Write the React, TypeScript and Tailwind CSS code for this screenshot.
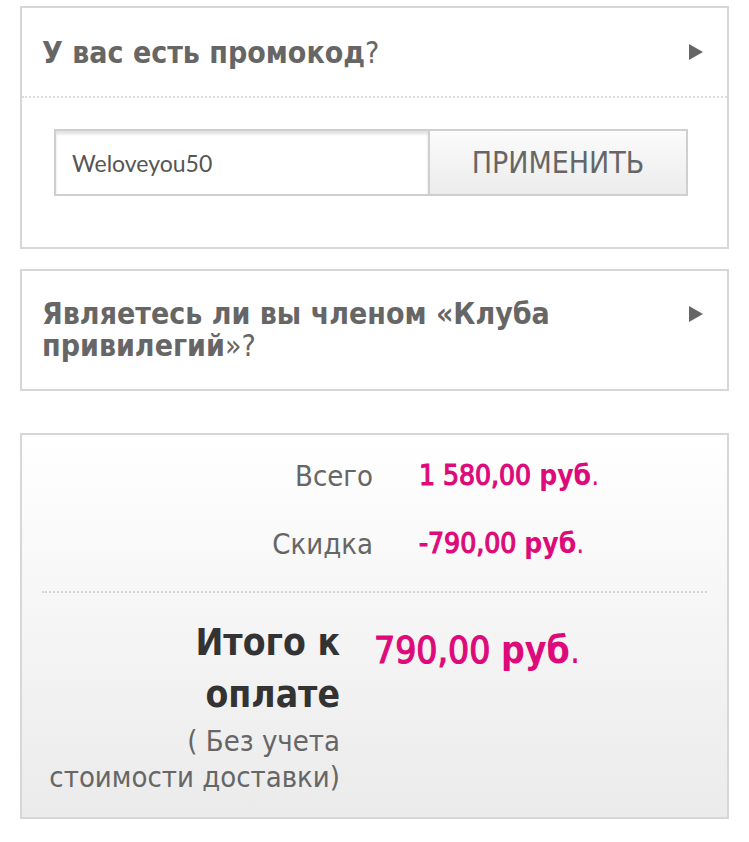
import { useState } from "react";

const FONT = "[font-family:'DejaVu_Sans_Condensed','DejaVu_Sans',sans-serif]";

function Arrow({ className = "" }: { className?: string }) {
  return (
    <svg viewBox="0 0 14 16" className={`h-4 w-[14px] shrink-0 fill-[#666] ${className}`}>
      <path d="M0 0 L14 8 L0 16 Z" />
    </svg>
  );
}

function Amount({ value, big }: { value: string; big?: boolean }) {
  return (
    <span className={`whitespace-nowrap text-[#dd0a7a] ${big ? "text-[37px] leading-[52px]" : "text-[28px] leading-[36px]"}`}>
      <span className="[-webkit-text-stroke:1.2px_#dd0a7a]">{value}</span> <span className="font-bold">руб</span>.
    </span>
  );
}

export default function App() {
  const [code, setCode] = useState("Weloveyou50");

  return (
    <div className={`flex min-h-[842px] flex-col bg-white px-5 pt-1.5 ${FONT}`}>
      <section className="border-2 border-[#d7d7d7]">
        <div className="flex h-[90px] items-center justify-between border-b-2 border-dotted border-[#dcdcdc] pl-5 pr-6">
          <h2 className="text-[30px] font-bold text-[#666]">
            У вас есть промокод<span className="font-normal">?</span>
          </h2>
          <Arrow />
        </div>
        <div className="flex px-8 pb-[51px] pt-[31px]">
          <input
            value={code}
            onChange={(e) => setCode(e.target.value)}
            className="h-[67px] w-[374px] border-2 border-r-0 border-[#cfcfcf] bg-white px-4 text-[23px] text-[#555] shadow-[inset_0_3px_3px_rgba(0,0,0,0.12)] outline-none [font-family:'Lato',sans-serif]"
          />
          <button
            type="button"
            className="h-[67px] w-[260px] border-2 border-[#cfcfcf] bg-gradient-to-b from-[#fbfbfb] to-[#ececec] text-[30px] text-[#666]"
          >
            ПРИМЕНИТЬ
          </button>
        </div>
      </section>

      <section className="mt-[20px] flex items-start justify-between border-2 border-[#d7d7d7] pb-[27px] pl-5 pr-6 pt-[27px]">
        <h2 className="text-[30px] font-bold leading-[32px] text-[#666]">
          Являетесь ли вы членом «Клуба привилегий<span className="font-normal">»?</span>
        </h2>
        <Arrow className="mt-2" />
      </section>

      <section className="mt-[42px] border-2 border-[#d7d7d7] bg-gradient-to-b from-white to-[#ebebeb] px-5 pb-[22px] pt-[23px]">
        <div className="grid grid-cols-[331px_1fr] items-center gap-x-[46px] gap-y-[32px] border-b-2 border-dotted border-[#d4d4d4] pb-[29px]">
          <span className="text-right text-[29px] leading-[36px] text-[#666]">Всего</span>
          <Amount value="1 580,00" />
          <span className="text-right text-[29px] leading-[36px] text-[#666]">Скидка</span>
          <Amount value="-790,00" />
        </div>
        <div className="mt-[24px] grid grid-cols-[298px_1fr] gap-x-[34px]">
          <div className="text-right">
            <p className="text-[37px] font-bold leading-[52px] text-[#333]">
              Итого к<br />оплате
            </p>
            <p className="mt-0.5 text-[29px] leading-[36px] text-[#666]">
              ( Без учета<br />стоимости доставки)
            </p>
          </div>
          <div className="pt-2">
            <Amount value="790,00" big />
          </div>
        </div>
      </section>
    </div>
  );
}
